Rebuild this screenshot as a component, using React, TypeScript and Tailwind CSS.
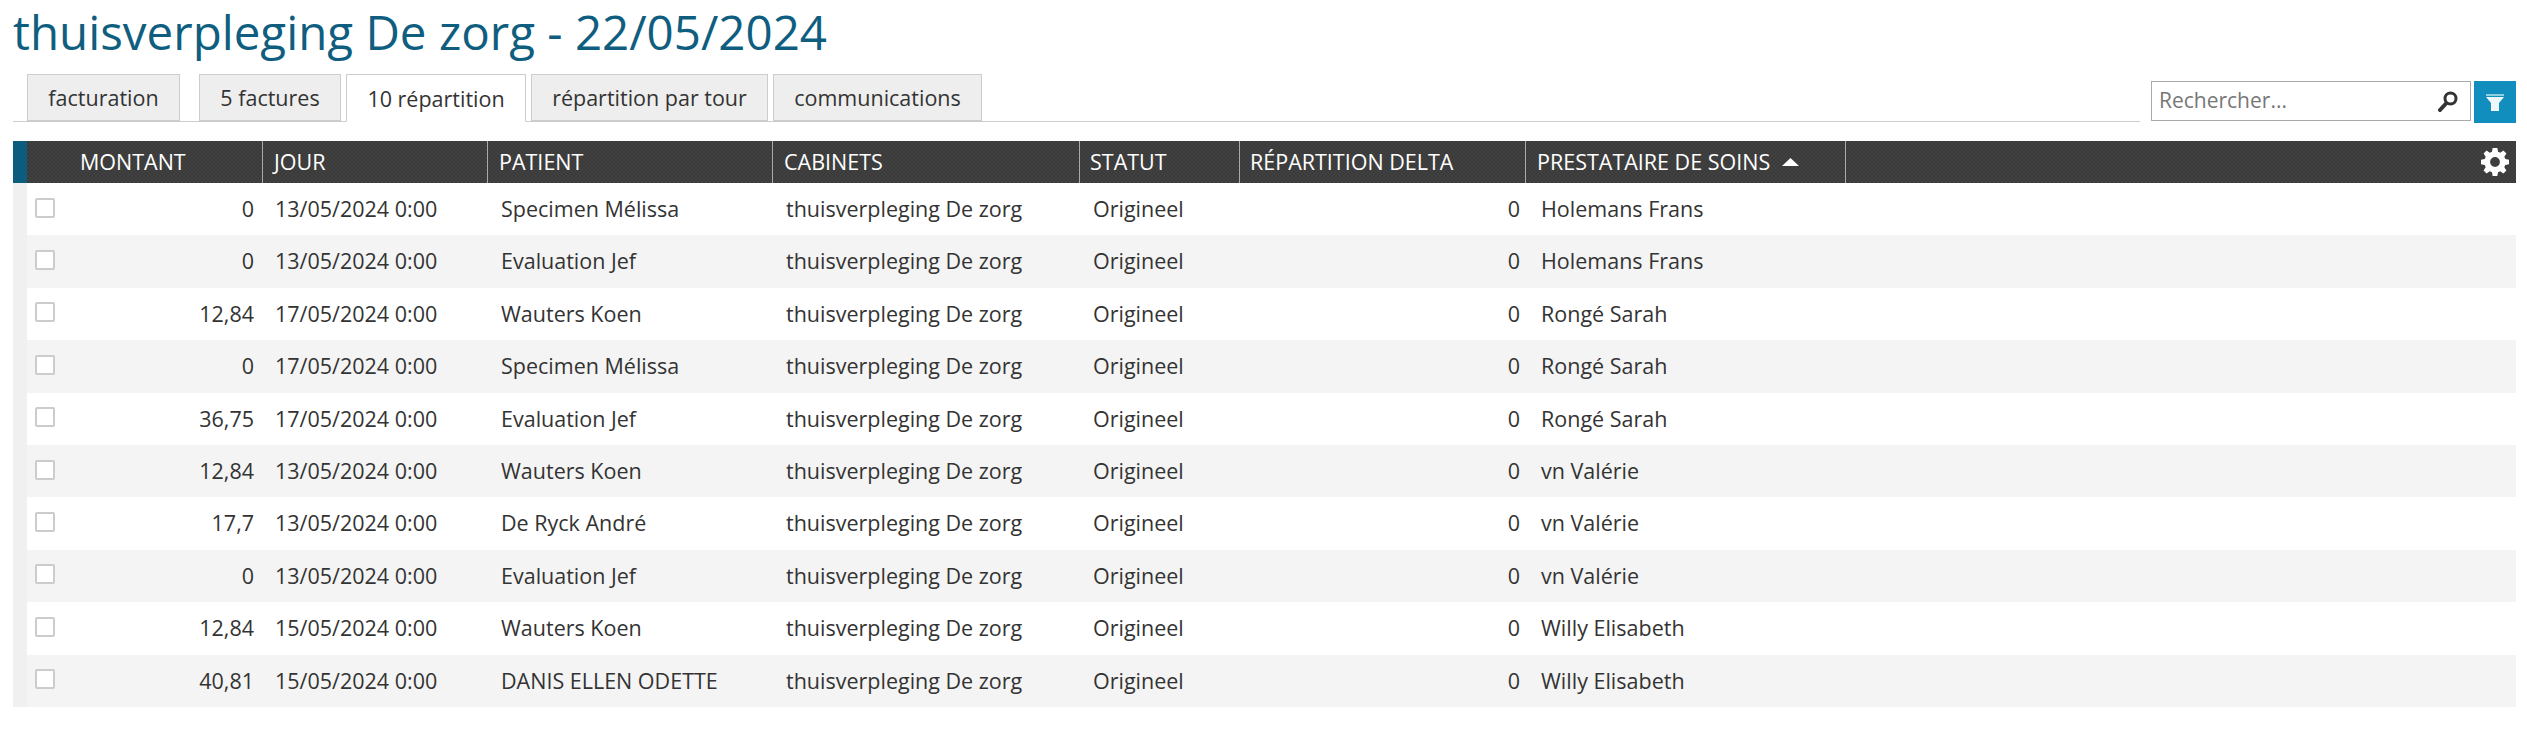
// ---- Data ---------------------------------------------------------------

const tabs = [
  { label: "facturation", className: "w-[153px] mr-[19px]" },
  { label: "5 factures", className: "w-[142px] mr-[5px]" },
  { label: "10 répartition", className: "w-[180px] mr-[5px]", active: true },
  { label: "répartition par tour", className: "w-[237px] mr-[5px]" },
  { label: "communications", className: "w-[209px]" },
];

const columns = [
  { label: "MONTANT", className: "pl-[53px]" },
  { label: "JOUR", className: "pl-[11px]" },
  { label: "PATIENT", className: "pl-[11px]" },
  { label: "CABINETS", className: "pl-[11px]" },
  { label: "STATUT", className: "pl-[10px]" },
  { label: "RÉPARTITION DELTA", className: "pl-[10px]" },
  { label: "PRESTATAIRE DE SOINS", className: "pl-[11px]", sorted: true },
];

const rows = [
  ["0", "13/05/2024 0:00", "Specimen Mélissa", "Holemans Frans"],
  ["0", "13/05/2024 0:00", "Evaluation Jef", "Holemans Frans"],
  ["12,84", "17/05/2024 0:00", "Wauters Koen", "Rongé Sarah"],
  ["0", "17/05/2024 0:00", "Specimen Mélissa", "Rongé Sarah"],
  ["36,75", "17/05/2024 0:00", "Evaluation Jef", "Rongé Sarah"],
  ["12,84", "13/05/2024 0:00", "Wauters Koen", "vn Valérie"],
  ["17,7", "13/05/2024 0:00", "De Ryck André", "vn Valérie"],
  ["0", "13/05/2024 0:00", "Evaluation Jef", "vn Valérie"],
  ["12,84", "15/05/2024 0:00", "Wauters Koen", "Willy Elisabeth"],
  ["40,81", "15/05/2024 0:00", "DANIS ELLEN ODETTE", "Willy Elisabeth"],
];

const gridCols = "grid grid-cols-[236px_225px_285px_307px_160px_286px_320px_1fr]";

// ---- Component ------------------------------------------------------------

export default function App() {
  return (
    <div className="h-[750px] bg-white pl-[13px] pr-[11px] font-['Open_Sans',sans-serif] text-[#333]">
      <h1 className="h-[74px] pt-[2px] text-[47.5px] leading-[60px] text-[#0f5e80]">
        thuisverpleging De zorg - 22/05/2024
      </h1>

      {/* Tabs + search */}
      <div className="flex items-start">
        <div className="flex h-[48px] w-[2127px] border-b border-[#ccc] pl-[14px]">
          {tabs.map((tab) => (
            <div
              key={tab.label}
              className={`flex h-[48px] items-center justify-center border pt-[2px] text-[21.5px] ${tab.className} ${
                tab.active
                  ? "border-[#ccc] border-b-white bg-white"
                  : "border-[#ccc] border-b-2 bg-[#eeeeee]"
              }`}
            >
              {tab.label}
            </div>
          ))}
        </div>
        <div className="ml-[11px] mt-[7px] flex h-[40px] w-[320px] items-center justify-between border border-[#aaa] pl-[7px] pr-[12px] text-[21px] text-[#777]">
          <span>Rechercher...</span>
          <svg width="20" height="21" viewBox="0 0 20 21" fill="none" stroke="#333">
            <circle cx="12.5" cy="7.5" r="5.5" strokeWidth="3" />
            <path d="M8 12.5L2 19" strokeWidth="4" strokeLinecap="round" />
          </svg>
        </div>
        <div className="ml-[3px] mt-[7px] flex h-[42px] w-[42px] items-center justify-center bg-[#118ebd]">
          <svg width="18" height="17" viewBox="0 0 18 17">
            <rect x="0" y="0" width="18" height="2" fill="#8fcde3" />
            <path d="M0 3h18l-5 6v8H5V9z" fill="#eef8fb" />
          </svg>
        </div>
      </div>

      {/* Table */}
      <div className="mt-[18px]">
        <div
          className={`${gridCols} relative h-[42px] items-center border-l-[14px] border-[#0b5c7d] bg-[repeating-conic-gradient(#424242_0_25%,#393939_0_50%)] bg-[length:4px_4px] text-[21.5px] text-white`}
        >
          {columns.map((col) => (
            <div
              key={col.label}
              className={`flex h-full items-center border-r border-[#aaa] ${col.className}`}
            >
              {col.label}
              {col.sorted && (
                <svg width="17" height="8" viewBox="0 0 17 8" className="ml-[12px]">
                  <path d="M8.5 0L17 8H0z" fill="#fff" />
                </svg>
              )}
            </div>
          ))}
          <div className="absolute right-[7px] top-[7px]">
            <svg width="28" height="28" viewBox="0 0 24 24" fill="#fff">
              <path
                fillRule="evenodd"
                d="M10 0h4l.6 3.2 1.9.8 2.7-1.8 2.6 2.6-1.8 2.7.8 1.9 3.2.6v4l-3.2.6-.8 1.9 1.8 2.7-2.6 2.6-2.7-1.8-1.9.8-.6 3.2h-4l-.6-3.2-1.9-.8-2.7 1.8-2.6-2.6 1.8-2.7-.8-1.900L0 14v-4l3.200-.6.8-1.900L2.200 4.800 4.800 2.200l2.700 1.800 1.900-.8zM12 7.800a4.200 4.200 0 100 8.400 4.200 4.200 0 000-8.400z"
              />
            </svg>
          </div>
        </div>

        <div className="border-l-[14px] border-[#f0f0f0]">
          {rows.map((row, i) => (
            <div
              key={i}
              className={`${gridCols} h-[52.4px] items-center text-[21.5px] ${
                i % 2 === 1 ? "bg-[#f4f4f4]" : "bg-white"
              }`}
            >
              <div className="flex items-center justify-between pl-[8px] pr-[9px]">
                <span className="-mt-[3px] h-[20px] w-[20px] rounded-[2px] border-2 border-[#ccc] bg-white" />
                <span>{row[0]}</span>
              </div>
              <div className="pl-[12px]">{row[1]}</div>
              <div className="pl-[13px]">{row[2]}</div>
              <div className="pl-[13px]">thuisverpleging De zorg</div>
              <div className="pl-[13px]">Origineel</div>
              <div className="pr-[6px] text-right">0</div>
              <div className="pl-[15px]">{row[3]}</div>
              <div />
            </div>
          ))}
        </div>
      </div>
    </div>
  );
}
